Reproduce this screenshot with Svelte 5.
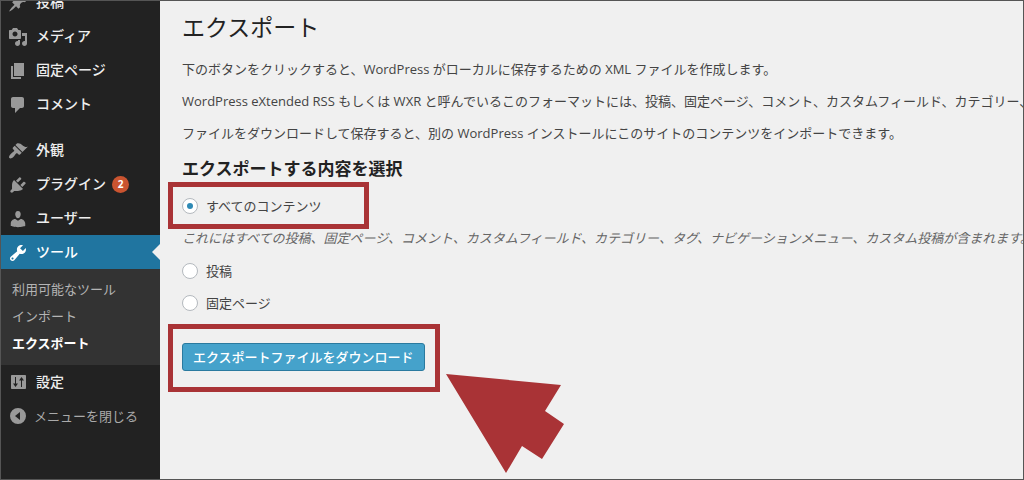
<script>
  const icons = {
    post: 'M10.44 3.02l1.82-1.82 6.36 6.35-1.83 1.82c-1.05-.68-2.48-.57-3.41.36l-.75.75c-.92.93-1.04 2.35-.35 3.41l-1.83 1.82-2.41-2.41-2.8 2.79c-.42.42-3.38 2.71-3.8 2.29s1.86-3.39 2.28-3.81l2.79-2.79L4.1 9.36l1.83-1.82c1.05.69 2.48.57 3.4-.36l.75-.75c.93-.92 1.05-2.35.36-3.41z',
    media: 'M13 11V4c0-.55-.45-1-1-1h-1.67L9 1H5L3.67 3H2c-.55 0-1 .45-1 1v7c0 .55.45 1 1 1h10c.55 0 1-.45 1-1zM7 4.5c1.38 0 2.5 1.12 2.5 2.5S8.38 9.5 7 9.5 4.5 8.38 4.5 7 5.62 4.5 7 4.5zM14 6h5v10.5c0 1.38-1.12 2.5-2.5 2.5S14 17.88 14 16.5s1.12-2.5 2.5-2.5c.17 0 .34.02.5.05V9h-3V6zm-4 8.05V13h2v3.5c0 1.38-1.12 2.5-2.5 2.5S7 17.88 7 16.5 8.12 14 9.5 14c.17 0 .34.02.5.05z',
    page: 'M6 15V2h10v13H6zm-1 1h8v2H3V5h2v11z',
    comment: 'M5 2h9c1.1 0 2 .9 2 2v7c0 1.1-.9 2-2 2h-2l-5 5v-5H5c-1.1 0-2-.9-2-2V4c0-1.1.9-2 2-2z',
    appearance: 'M14.48 11.06L7.41 3.99l1.5-1.5c.5-.56 2.3-.47 3.51.32 1.21.8 1.43 1.28 2.91 2.1 1.18.64 2.45 1.26 4.45.85zm-.71.71L6.7 4.7 4.93 6.47c-.39.39-.39 1.02 0 1.41l1.06 1.06c.39.39.39 1.03 0 1.42-.6.6-1.43 1.11-2.21 1.69-.35.26-.7.53-1.01.84C1.43 14.23.4 16.08 1.4 17.07c.99 1 2.84-.03 4.18-1.36.31-.31.58-.66.85-1.02.57-.78 1.08-1.61 1.69-2.21.39-.39 1.02-.39 1.41 0l1.06 1.06c.39.39 1.02.39 1.41 0z',
    plugin: 'M13.11 4.36L9.87 7.6 8 5.73l3.24-3.24c.35-.34 1.05-.2 1.56.32.52.51.66 1.21.31 1.55zm-8 1.77l.91-1.12 9.01 9.01-1.19.84c-.71.71-2.63 1.16-3.82 1.16H6.14L4.9 17.26c-.59.59-1.54.59-2.12 0-.59-.58-.59-1.53 0-2.12l1.24-1.24v-3.88c0-1.13.4-3.19 1.09-3.89zm7.26 3.97l3.24-3.24c.34-.35 1.04-.21 1.55.31.52.51.66 1.21.31 1.55l-3.24 3.25z',
    user: 'M10 9.25c-2.27 0-2.73-3.44-2.73-3.44C7 4.02 7.82 2 9.97 2c2.16 0 2.98 2.02 2.71 3.81 0 0-.41 3.44-2.68 3.44zm0 2.57L12.72 10c2.39 0 4.52 2.33 4.52 4.53v2.49s-3.65 1.13-7.24 1.13c-3.65 0-7.24-1.13-7.24-1.13v-2.49c0-2.25 1.94-4.48 4.47-4.48z',
    tool: 'M16.68 9.77c-1.34 1.34-3.3 1.67-4.95.99l-5.41 6.52c-.99.99-2.59.99-3.58 0s-.99-2.59 0-3.57l6.52-5.42c-.68-1.65-.35-3.61.99-4.95 1.28-1.28 3.12-1.62 4.72-1.06l-2.89 2.89 2.82 2.82 2.86-2.87c.53 1.58.18 3.39-1.08 4.65zM3.81 16.21c.4.39 1.04.39 1.43 0 .4-.4.4-1.04 0-1.43-.39-.4-1.03-.4-1.43 0-.39.39-.39 1.03 0 1.43z',
    settings: 'M18 15V3c0-.55-.45-1-1-1H4c-.55 0-1 .45-1 1v12c0 .55.45 1 1 1h13c.55 0 1-.45 1-1zM7 4h1v6.500h2L7.500 14 5 10.500h2zM13 14h1V7.500h2L13.500 4 11 7.500h2z',
    collapse: 'M10 2a8 8 0 1 0 0 16 8 8 0 0 0 0-16zM12 6v8l-5-4z'
  };

  const menu = [
    { label: '投稿', icon: 'post' },
    { label: 'メディア', icon: 'media' },
    { label: '固定ページ', icon: 'page' },
    { label: 'コメント', icon: 'comment' },
    { label: '外観', icon: 'appearance', gap: true },
    { label: 'プラグイン', icon: 'plugin', count: 2 },
    { label: 'ユーザー', icon: 'user' },
    {
      label: 'ツール',
      icon: 'tool',
      active: true,
      children: ['利用可能なツール', 'インポート', 'エクスポート']
    },
    { label: '設定', icon: 'settings' }
  ];

  let content = $state('all');
</script>

{#snippet glyph(name)}
  <svg class="icon" viewBox="0 0 20 20" aria-hidden="true"><path d={icons[name]} fill-rule="evenodd" /></svg>
{/snippet}

<div class="frame">
  <nav class="sidebar">
    <ul class="menu">
      {#each menu as item}
        <li class:gap={item.gap}>
          <a class="item" class:active={item.active} href="#top">
            {@render glyph(item.icon)}
            <span>{item.label}</span>
            {#if item.count}<span class="count">{item.count}</span>{/if}
          </a>
          {#if item.children}
            <ul class="submenu">
              {#each item.children as child}
                <li><a class:current={child === 'エクスポート'} href="#top">{child}</a></li>
              {/each}
            </ul>
          {/if}
        </li>
      {/each}
    </ul>
    <button class="item collapse" type="button">
      {@render glyph('collapse')}
      <span>メニューを閉じる</span>
    </button>
  </nav>

  <main>
    <h1>エクスポート</h1>
    <p>下のボタンをクリックすると、WordPress がローカルに保存するための XML ファイルを作成します。</p>
    <p>WordPress eXtended RSS もしくは WXR と呼んでいるこのフォーマットには、投稿、固定ページ、コメント、カスタムフィールド、カテゴリー、タグが含まれます。</p>
    <p>ファイルをダウンロードして保存すると、別の WordPress インストールにこのサイトのコンテンツをインポートできます。</p>

    <h2>エクスポートする内容を選択</h2>
    <form onsubmit={(e) => e.preventDefault()}>
      <div class="mark choice">
        <label><input type="radio" name="content" value="all" bind:group={content} />すべてのコンテンツ</label>
      </div>
      <p class="description">これにはすべての投稿、固定ページ、コメント、カスタムフィールド、カテゴリー、タグ、ナビゲーションメニュー、カスタム投稿が含まれます。</p>
      <label class="row"><input type="radio" name="content" value="posts" bind:group={content} />投稿</label>
      <label class="row"><input type="radio" name="content" value="pages" bind:group={content} />固定ページ</label>
      <div class="mark submit">
        <button class="primary" type="submit">エクスポートファイルをダウンロード</button>
        <svg class="arrow" viewBox="0 0 118 99" aria-hidden="true">
          <path d="M0 0L115 11L99 37L118 50L96 85L76 72L60 99Z" />
        </svg>
      </div>
    </form>
  </main>
</div>

<style>
  :global(body) {
    margin: 0;
    background: #f0f0f0;
  }

  .frame {
    box-sizing: border-box;
    display: flex;
    height: 100vh;
    overflow: hidden;
    border: 1px solid #555;
    background: #f0f0f0;
    color: #444;
    font: 13px/20px 'Open Sans', 'Noto Sans CJK JP', sans-serif;
  }

  .sidebar {
    flex: 0 0 159px;
    background: #222;
  }

  ul {
    margin: 0;
    padding: 0;
    list-style: none;
  }

  .menu {
    margin-top: -16px;
  }

  .gap {
    margin-top: 12px;
  }

  a {
    color: inherit;
    text-decoration: none;
  }

  .item {
    position: relative;
    display: flex;
    align-items: center;
    gap: 8px;
    height: 34px;
    padding: 0 7px;
    color: #eee;
    font-size: 14px;
    font-weight: 500;
  }

  .icon {
    flex: none;
    width: 20px;
    height: 20px;
    margin-top: 2px;
    fill: #999;
  }

  .active {
    background: #2075a0;
    color: #fff;
  }

  .active .icon {
    fill: #fff;
  }

  .active::after {
    content: '';
    position: absolute;
    top: 9px;
    right: 0;
    border: 8px solid transparent;
    border-left: 0;
    border-right-color: #f0f0f0;
  }

  .count {
    width: 17px;
    height: 17px;
    margin-left: -2px;
    border-radius: 50%;
    background: #ca5430;
    color: #fff;
    font-size: 10px;
    font-weight: 700;
    line-height: 17px;
    text-align: center;
  }

  .submenu {
    padding: 7px 11px 8px;
    background: #333;
    color: #b4b4b4;
    line-height: 27px;
  }

  .submenu a {
    display: block;
  }

  .current {
    color: #fff;
    font-weight: 700;
  }

  .collapse {
    width: 100%;
    border: 0;
    background: none;
    color: #aaa;
    font: inherit;
    gap: 6px;
    cursor: pointer;
  }

  .collapse .icon {
    margin-top: 0;
  }

  main {
    flex: 1;
    min-width: 0;
    padding: 9px 0 0 22px;
    white-space: nowrap;
  }

  h1 {
    margin: 0 0 15px;
    color: #222;
    font-size: 23px;
    font-weight: 400;
    line-height: 34px;
  }

  p {
    margin: 0 0 12px;
  }

  h2 {
    margin: 0;
    color: #222;
    font-size: 17px;
    font-weight: 700;
    line-height: 27px;
  }

  .mark {
    box-sizing: border-box;
    width: max-content;
    margin-left: -14px;
    border: 5px solid #a93336;
  }

  .choice {
    padding: 9px 42px 8px 9px;
  }

  label {
    display: flex;
    align-items: center;
    gap: 8px;
    height: 20px;
  }

  .choice label {
    min-width: 140px;
  }

  .row {
    margin-bottom: 12px;
  }

  input {
    box-sizing: border-box;
    display: grid;
    place-items: center;
    width: 16px;
    height: 16px;
    margin: 0;
    border: 1px solid #b4b9be;
    border-radius: 50%;
    background: #fff;
    appearance: none;
  }

  input:checked::before {
    content: '';
    width: 6px;
    height: 6px;
    border-radius: 50%;
    background: #2e8ab5;
  }

  .description {
    margin-top: -1px;
    margin-bottom: 13px;
    color: #666;
    font-style: italic;
  }

  .submit {
    position: relative;
    margin-top: -1px;
    padding: 14px 10px 16px 9px;
  }

  .primary {
    display: block;
    box-sizing: border-box;
    height: 28px;
    padding: 0 10px;
    border: 1px solid #2a7a9f;
    border-radius: 3px;
    background: #45a2cb;
    color: #fff;
    font: inherit;
    font-weight: 500;
    line-height: 26px;
    cursor: pointer;
  }

  .arrow {
    position: absolute;
    top: 45px;
    left: 273px;
    width: 118px;
    height: 99px;
    fill: #a93336;
  }
</style>
